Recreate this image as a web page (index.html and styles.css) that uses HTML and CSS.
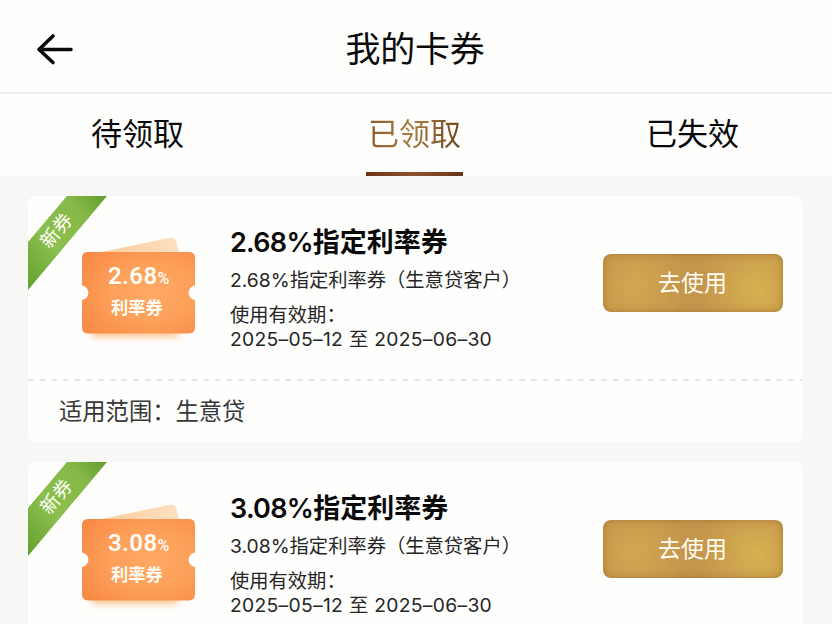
FILE: index.html
```html
<!DOCTYPE html>
<html lang="zh-CN">
<head>
    <meta charset="UTF-8">
    <meta name="viewport" content="width=device-width, initial-scale=1.0">
    <title>我的卡券</title>
    <link rel="stylesheet" href="styles.css">
</head>
<body>
    <header class="header">
        <svg class="back" viewBox="0 0 40 36" fill="none" stroke="#0a0a0a" stroke-width="3.6" stroke-linecap="round" stroke-linejoin="round">
            <path d="M18 5 L4 18.500 L18 31.500 M4 18.500 H36"/>
        </svg>
        <h1>我的卡券</h1>
    </header>

    <nav class="tabs">
        <div class="tab"><span>待领取</span></div>
        <div class="tab active"><span>已领取</span></div>
        <div class="tab"><span>已失效</span></div>
    </nav>

    <!-- shared gradients -->
    <svg class="defs">
        <defs>
            <linearGradient id="ribbon" x1="1" y1="0" x2="0" y2="1">
                <stop offset="0" stop-color="#5f9e2c"/>
                <stop offset="0.25" stop-color="#86b848"/>
                <stop offset="0.6" stop-color="#8cbf4f"/>
                <stop offset="1" stop-color="#62a02c"/>
            </linearGradient>
            <radialGradient id="ticket" cx="0.62" cy="0.5" r="0.75">
                <stop offset="0" stop-color="#ffaa66"/>
                <stop offset="0.5" stop-color="#fc9f59"/>
                <stop offset="1" stop-color="#f88945"/>
            </radialGradient>
            <linearGradient id="back" x1="0" y1="0" x2="1" y2="0">
                <stop offset="0" stop-color="#fbc999"/>
                <stop offset="1" stop-color="#fde0c0"/>
            </linearGradient>
            <filter id="glow" x="-20%" y="-100%" width="140%" height="300%">
                <feGaussianBlur stdDeviation="3.5"/>
            </filter>
        </defs>
    </svg>

    <main class="list">
        <section class="card">
            <svg class="ribbon" viewBox="0 0 80 96">
                <path d="M39 0 H79 L0 94 V46 Z" fill="url(#ribbon)"/>
                <text x="29" y="41" text-anchor="middle" transform="rotate(-50 29 35)">新券</text>
            </svg>
            <div class="main">
                <svg class="ticket" viewBox="0 0 130 120">
                    <rect x="14" y="91" width="86" height="15" fill="#fdc48c" filter="url(#glow)"/>
                    <path d="M14 23 L91 7 Q97 5.500 98.500 11 L102 26 H14 Z" fill="url(#back)"/>
                    <path d="M10 21 H111 Q117 21 117 27 V54.500 A7.300 7.300 0 0 0 117 69 V96 Q117 102.500 111 102.500 H10 Q4 102.500 4 96 V69 A7.300 7.300 0 0 0 4 54.500 V27 Q4 21 10 21 Z" fill="url(#ticket)"/>
                    <text class="rate" x="30" y="53">2.68<tspan class="percent">%</tspan></text>
                    <text class="kind" x="33" y="83">利率券</text>
                </svg>
                <div class="info">
                    <h2><span class="num">2.68%</span>指定利率券</h2>
                    <p class="desc">2.68%指定利率券（生意贷客户）</p>
                    <p class="label">使用有效期：</p>
                    <p class="date">2025–05–12 至 2025–06–30</p>
                </div>
                <button class="use">去使用</button>
            </div>
            <svg class="divider" viewBox="0 0 774 2"><path d="M0 1 H774"/></svg>
            <div class="scope">适用范围：生意贷</div>
        </section>

        <section class="card">
            <svg class="ribbon" viewBox="0 0 80 96">
                <path d="M39 0 H79 L0 94 V46 Z" fill="url(#ribbon)"/>
                <text x="29" y="41" text-anchor="middle" transform="rotate(-50 29 35)">新券</text>
            </svg>
            <div class="main">
                <svg class="ticket" viewBox="0 0 130 120">
                    <rect x="14" y="91" width="86" height="15" fill="#fdc48c" filter="url(#glow)"/>
                    <path d="M14 23 L91 7 Q97 5.500 98.500 11 L102 26 H14 Z" fill="url(#back)"/>
                    <path d="M10 21 H111 Q117 21 117 27 V54.500 A7.300 7.300 0 0 0 117 69 V96 Q117 102.500 111 102.500 H10 Q4 102.500 4 96 V69 A7.300 7.300 0 0 0 4 54.500 V27 Q4 21 10 21 Z" fill="url(#ticket)"/>
                    <text class="rate" x="30" y="53">3.08<tspan class="percent">%</tspan></text>
                    <text class="kind" x="33" y="83">利率券</text>
                </svg>
                <div class="info">
                    <h2><span class="num">3.08%</span>指定利率券</h2>
                    <p class="desc">3.08%指定利率券（生意贷客户）</p>
                    <p class="label">使用有效期：</p>
                    <p class="date">2025–05–12 至 2025–06–30</p>
                </div>
                <button class="use">去使用</button>
            </div>
        </section>
    </main>
</body>
</html>
```
FILE: styles.css
```css
* { box-sizing: border-box; margin: 0; padding: 0; }
body { height: 624px; overflow: hidden; background: #f7f7f6; color: #0a0a0a; font-family: Inter, "Noto Sans CJK SC", sans-serif; }
.defs { display: block; width: 0; height: 0; }

.header { display: grid; grid-template-columns: 120px 1fr 122px; align-items: center; height: 94px; padding-top: 6px; background: #fefefd; border-bottom: 2px solid #eeeeee; }
.back { width: 40px; height: 36px; margin-left: 35px; }
.header h1 { font-size: 35px; font-weight: 400; line-height: 50px; text-align: center; letter-spacing: -0.2px; }

.tabs { display: grid; grid-template-columns: 275px 279px 277px; height: 82px; background: #fefefd; }
.tab { display: flex; flex-direction: column; align-items: center; padding-top: 17px; font-size: 31px; line-height: 46px; }
.active span { background: linear-gradient(100deg, #8a5526, #a87f45 45%, #6d4119); -webkit-background-clip: text; background-clip: text; color: transparent; }
.active::after { content: ""; width: 97px; height: 4px; margin-top: 15px; background: linear-gradient(90deg, #6b3317, #89552e 50%, #6b3317); }

.list { display: flex; flex-direction: column; gap: 20px; height: 448px; overflow: hidden; padding: 19.500px 30px 0 28px; }
.card { position: relative; flex: none; overflow: hidden; border-radius: 8px; background: #fefefd; }
.ribbon { position: absolute; left: 0; top: 0; width: 80px; height: 96px; }
.ribbon text { font-size: 19px; fill: #fdfff5; }

.main { display: flex; height: 183px; padding-left: 50px; }
.ticket { width: 130px; height: 120px; margin-top: 35.500px; flex: none; }
.ticket text { fill: #fffdf5; }
.rate { font-family: Roboto, sans-serif; font-size: 24px; font-weight: 600; letter-spacing: 0.4px; }
.percent { font-size: 16px; font-weight: 500; letter-spacing: 0; }
.kind { font-size: 17.300px; font-weight: 700; }

.info { width: 372px; padding-top: 27px; padding-left: 22px; flex: none; white-space: nowrap; }
.info h2 { font-size: 27px; font-weight: 600; line-height: 40px; }
.info h2 .num { letter-spacing: -0.7px; }
.info p { font-size: 19.300px; line-height: 24px; color: #262626; }
.info .desc { margin-top: 5px; margin-bottom: 11px; }
.info .date { letter-spacing: 0.300px; }

.use { width: 180px; height: 58px; margin-top: 58px; margin-left: 22.500px; flex: none; border: none; border-radius: 8px; color: #fffdf2; font: 400 23px/58px Inter, "Noto Sans CJK SC", sans-serif; background: radial-gradient(ellipse 50px 60px at 18% 55%, #d3a750, transparent), radial-gradient(ellipse 60px 60px at 86% 60%, #d6b050, transparent), #c4954c; box-shadow: inset 0 0 7px rgba(150, 95, 40, 0.6); }

.divider { display: block; width: 774px; height: 2px; }
.divider path { stroke: #dededc; stroke-width: 1.600; stroke-dasharray: 5.500 6.200; }
.scope { height: 61.500px; padding-left: 31px; padding-top: 13px; font-size: 23.300px; line-height: 36px; color: #383838; }
```
